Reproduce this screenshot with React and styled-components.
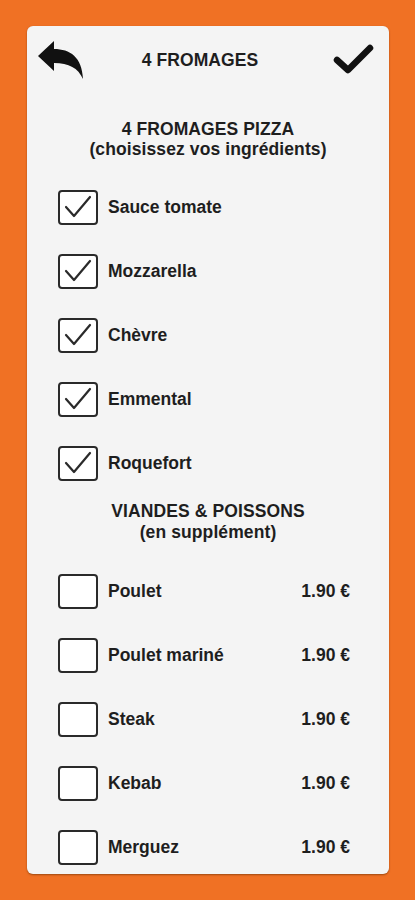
import React from "react";
import styled, { createGlobalStyle } from "styled-components";

const Global = createGlobalStyle`
  html, body { margin: 0; padding: 0; background: #f07124; }
  body { font-family: "Liberation Sans", Arial, sans-serif; }
`;

const Page = styled.div`
  width: 415px;
  height: 900px;
  background: #f07124;
  padding: 26px 26px 0 27px;
  box-sizing: border-box;
`;

const Card = styled.div`
  width: 362px;
  height: 848px;
  background: #f4f4f4;
  border-radius: 6px;
  box-shadow: 0 1px 2px rgba(90, 40, 0, 0.55);
  overflow: hidden;
  display: flex;
  flex-direction: column;
  color: #1e1e1e;
`;

const Header = styled.div`
  height: 68px;
  flex-shrink: 0;
  display: flex;
  align-items: center;
  justify-content: space-between;
  padding: 0 14px 0 10px;
`;

const Title = styled.div`
  font-weight: 700;
  font-size: 17.5px;
  letter-spacing: 0.1px;
  margin-right: 18px;
`;

const IconButton = styled.div`
  display: flex;
  align-items: center;
  justify-content: center;
  width: ${(p) => p.$w}px;
  height: 40px;
`;

const SectionTitle = styled.div`
  flex-shrink: 0;
  margin-top: ${(p) => p.$mt}px;
  margin-bottom: ${(p) => p.$mb}px;
  text-align: center;
  font-weight: 700;
  font-size: 17.5px;
  letter-spacing: 0.1px;
  line-height: ${(p) => p.$lh}px;
`;

const Row = styled.div`
  height: 64px;
  flex-shrink: 0;
  display: flex;
  align-items: center;
  padding: 0 39px 0 31px;
`;

const Box = styled.div`
  width: 40px;
  height: 35px;
  box-sizing: border-box;
  border: 2px solid #2a2a2a;
  border-radius: 4px;
  background: #fff;
  display: flex;
  align-items: center;
  justify-content: center;
  flex-shrink: 0;
`;

const Label = styled.div`
  margin-left: 10px;
  flex: 1;
  font-weight: 700;
  font-size: 17.5px;
`;

const Price = styled.div`
  font-weight: 700;
  font-size: 17.5px;
`;

const BackIcon = () => (
  <svg width="48" height="40" viewBox="0 0 48 40">
    <path
      d="M1 16 L17 1 L17 9 C33 9 45 17 46 39 C41 28 32 23 17 23 L17 31 Z"
      fill="#111"
      strokeLinejoin="round"
    />
  </svg>
);

const DoneIcon = () => (
  <svg width="42" height="32" viewBox="0 0 42 32">
    <path
      d="M4 16 L15 26 L37 4"
      fill="none"
      stroke="#111"
      strokeWidth="6.5"
      strokeLinecap="round"
      strokeLinejoin="round"
    />
  </svg>
);

const Tick = () => (
  <svg width="30" height="26" viewBox="0 0 30 26">
    <path
      d="M3 13 L11 22 L27 3"
      fill="none"
      stroke="#2a2a2a"
      strokeWidth="2.2"
      strokeLinecap="round"
      strokeLinejoin="round"
    />
  </svg>
);

const base = ["Sauce tomate", "Mozzarella", "Chèvre", "Emmental", "Roquefort"];
const extras = ["Poulet", "Poulet mariné", "Steak", "Kebab", "Merguez"];

export default function App() {
  return (
    <>
      <Global />
      <Page>
        <Card>
          <Header>
            <IconButton $w={48}>
              <BackIcon />
            </IconButton>
            <Title>4 FROMAGES</Title>
            <IconButton $w={42}>
              <DoneIcon />
            </IconButton>
          </Header>
          <SectionTitle $mt={25} $mb={16} $lh={20}>
            4 FROMAGES PIZZA
            <br />
            (choisissez vos ingrédients)
          </SectionTitle>
          {base.map((n) => (
            <Row key={n}>
              <Box>
                <Tick />
              </Box>
              <Label>{n}</Label>
            </Row>
          ))}
          <SectionTitle $mt={6} $mb={16} $lh={21}>
            VIANDES &amp; POISSONS
            <br />
            (en supplément)
          </SectionTitle>
          {extras.map((n) => (
            <Row key={n}>
              <Box />
              <Label>{n}</Label>
              <Price>1.90 €</Price>
            </Row>
          ))}
        </Card>
      </Page>
    </>
  );
}
